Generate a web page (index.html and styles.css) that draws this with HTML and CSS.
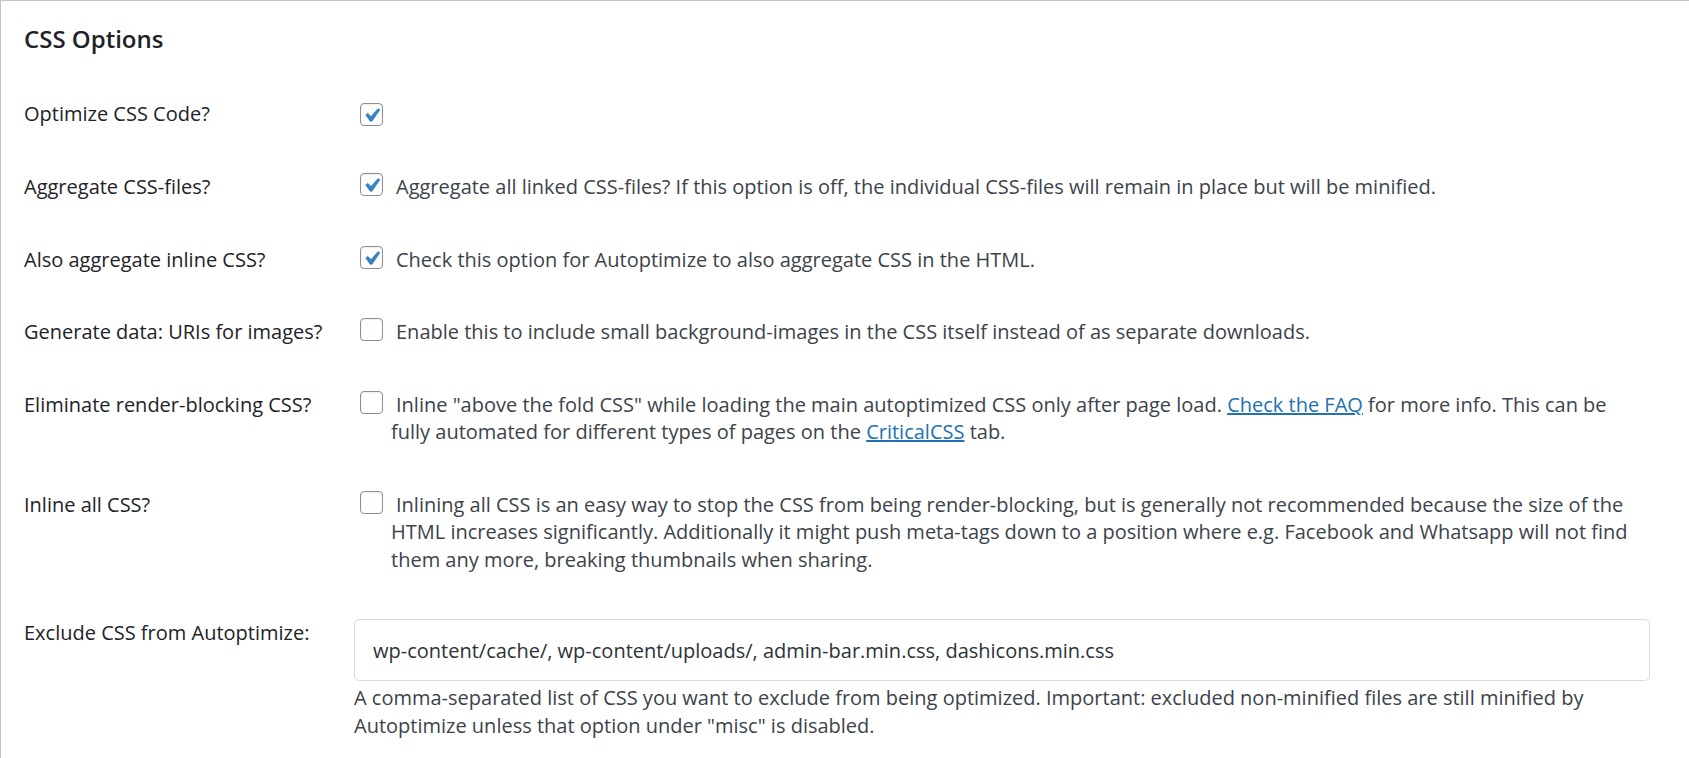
FILE: index.html
```html
<!DOCTYPE html>
<html lang="en">
<head>
<meta charset="utf-8">
<title>CSS Options</title>
<link rel="stylesheet" href="styles.css">
</head>
<body>
<div class="panel">
  <h2 class="title">CSS Options</h2>
  <div class="form">
    <div class="row">
      <div class="label">Optimize CSS Code?</div>
      <div class="field opt"><span class="cb cb-solo"><svg viewBox="0 0 20 20"><path d="M14.83 4.89l1.34.94-5.81 8.38H9.02L5.78 9.67l1.34-1.25 2.57 2.4z"/></svg></span></div>
    </div>
    <div class="row">
      <div class="label">Aggregate CSS-files?</div>
      <div class="field opt"><span class="cb"><svg viewBox="0 0 20 20"><path d="M14.83 4.89l1.34.94-5.81 8.38H9.02L5.78 9.67l1.34-1.25 2.57 2.4z"/></svg></span>Aggregate all linked CSS-files? If this option is off, the individual CSS-files will remain in place but will be minified.</div>
    </div>
    <div class="row">
      <div class="label">Also aggregate inline CSS?</div>
      <div class="field opt"><span class="cb"><svg viewBox="0 0 20 20"><path d="M14.83 4.89l1.34.94-5.81 8.38H9.02L5.78 9.67l1.34-1.25 2.57 2.4z"/></svg></span>Check this option for Autoptimize to also aggregate CSS in the HTML.</div>
    </div>
    <div class="row">
      <div class="label">Generate data: URIs for images?</div>
      <div class="field opt"><span class="cb"></span>Enable this to include small background-images in the CSS itself instead of as separate downloads.</div>
    </div>
    <div class="row">
      <div class="label">Eliminate render-blocking CSS?</div>
      <div class="field opt"><span class="cb"></span><span>Inline "above the fold CSS" while loading the main autoptimized CSS only after page load.</span> <a href="#">Check the FAQ</a> <span>for more info. This can be</span> <span>fully automated for different types of pages on the</span> <a href="#">CriticalCSS</a> <span>tab.</span></div>
    </div>
    <div class="row">
      <div class="label">Inline all CSS?</div>
      <div class="field opt"><span class="cb"></span>Inlining all CSS is an easy way to stop the CSS from being render-blocking, but is generally not recommended because the size of the HTML increases significantly. Additionally it might push meta-tags down to a position where e.g. Facebook and Whatsapp will not find them any more, breaking thumbnails when sharing.</div>
    </div>
    <div class="row row-input">
      <div class="label">Exclude CSS from Autoptimize:</div>
      <div class="field">
        <input class="text" type="text" value="wp-content/cache/, wp-content/uploads/, admin-bar.min.css, dashicons.min.css">
        <p class="description">A comma-separated list of CSS you want to exclude from being optimized. Important: excluded non-minified files are still minified by Autoptimize unless that option under "misc" is disabled.</p>
      </div>
    </div>
  </div>
</div>
</body>
</html>
```
FILE: styles.css
```css
html, body {
  margin: 0;
  padding: 0;
  background: #ffffff;
}

body {
  font-family: "Open Sans", "Noto Sans", sans-serif;
  font-size: 20px;
  color: #3c434a;
}

.panel {
  box-sizing: border-box;
  min-height: 100vh;
  border-top: 1px solid #c3c4c7;
  border-left: 1px solid #c3c4c7;
  padding: 0 0 0 23px;
  background: #ffffff;
}

.title {
  margin: 23px 0 23.6px;
  font-size: 24px;
  line-height: 30px;
  font-weight: 600;
  color: #1d2327;
}

.row {
  display: grid;
  grid-template-columns: 330px 1296px;
  padding: 22.7px 0;
  line-height: 27.3px;
}

.row-input {
  padding-top: 23.7px;
}

.label {
  color: #1d2327;
}

.opt {
  padding: 0 10px 0 37px;
  text-indent: -31px;
}

.cb {
  position: relative;
  display: inline-block;
  box-sizing: border-box;
  width: 23px;
  height: 23px;
  margin-right: 13px;
  vertical-align: top;
  text-indent: 0;
  border: 1px solid #8c8f94;
  border-radius: 4px;
  background: #ffffff;
  box-shadow: inset 0 1px 2px rgba(0, 0, 0, 0.08);
}

.cb-solo {
  margin-top: 3px;
}

.cb svg {
  position: absolute;
  left: -3px;
  top: -2px;
  width: 27px;
  height: 27px;
  fill: #3582c4;
  stroke: #3582c4;
  stroke-width: 0.55;
  stroke-linejoin: round;
}

a {
  color: #2271b1;
  text-decoration: underline;
}

.text {
  display: block;
  box-sizing: border-box;
  width: 100%;
  height: 62px;
  margin: 0;
  padding: 0 18px;
  border: 1px solid #dcdcde;
  border-radius: 5px;
  background: #ffffff;
  font-family: "Open Sans", "Noto Sans", sans-serif;
  font-size: 20px;
  color: #2c3338;
  outline: none;
}

.description {
  margin: 3px 0 0;
  line-height: 28px;
  color: #3c434a;
}
```
